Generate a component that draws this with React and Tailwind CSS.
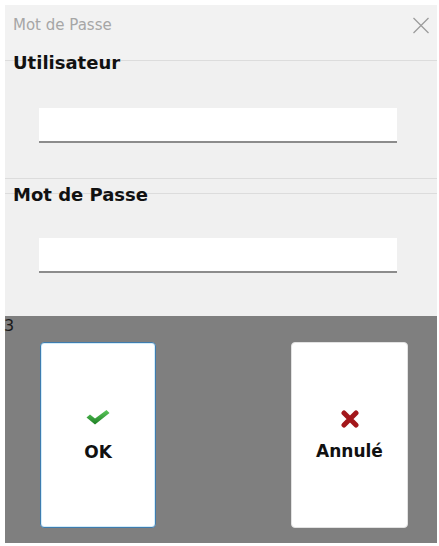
const labelFont = { fontFamily: '"DejaVu Sans", sans-serif' };

function GroupBox({ label, labelTop, children, className }) {
  return (
    <div className={`relative border-t border-[#dcdcdc] ${className || ""}`}>
      <span
        className={`absolute left-[8px] ${labelTop} text-[18px] leading-[21px] font-bold text-[#111]`}
        style={labelFont}
      >
        {label}
      </span>
      {children}
    </div>
  );
}

function Field() {
  return <div className="ml-[34px] w-[358px] h-[35px] bg-white border-b-2 border-[#8c8c8c]" />;
}

function CloseIcon() {
  return (
    <svg width="18" height="17" viewBox="0 0 18 17" className="mt-[1px]">
      <path d="M1.5 1 L16.5 16 M16.5 1 L1.5 16" stroke="#9c9c9c" strokeWidth="1.3" />
    </svg>
  );
}

function CheckIcon() {
  return (
    <svg width="26" height="16" viewBox="0 0 25 16">
      <defs>
        <linearGradient id="ck" x1="0" y1="0" x2="0" y2="1">
          <stop offset="0" stopColor="#5cc85c" />
          <stop offset="1" stopColor="#1d7f24" />
        </linearGradient>
      </defs>
      <polygon points="1,8.5 4.5,5.5 9.5,9.5 21,1 24,4 9.5,15.5" fill="url(#ck)" />
    </svg>
  );
}

function CrossIcon() {
  return (
    <svg width="18" height="18" viewBox="0 0 18 18">
      <path d="M3 3 L15 15 M15 3 L3 15" stroke="#a3171b" strokeWidth="5" strokeLinecap="round" />
    </svg>
  );
}

export default function App() {
  return (
    <div className="w-[439px] h-[546px] bg-white pt-[5px] pl-[5px]">
      <div className="w-[432px] h-[538px] bg-[#f0f0f0] flex flex-col">
        {/* title bar */}
        <div className="h-[55px] flex items-start justify-between pt-[11px] pl-[8px] pr-[7px] bg-[#f2f2f2]">
          <span className="text-[15px] leading-[18px] text-[#a6a6a6]" style={labelFont}>
            Mot de Passe
          </span>
          <CloseIcon />
        </div>

        <GroupBox label="Utilisateur" labelTop="-top-[9px]" className="pt-[47px] pb-[35px] border-b">
          <Field />
        </GroupBox>

        <GroupBox label="Mot de Passe" labelTop="-top-[10px]" className="mt-[14px] pt-[44px]">
          <Field />
        </GroupBox>

        {/* button panel */}
        <div className="mt-[43px] flex-1 bg-[#7f7f7f] flex flex-col">
          <span className="text-[16px] leading-[17px] h-[17px] text-[#1a1a1a] mt-[1px] ml-[-1px]" style={labelFont}>
            3
          </span>
          <div className="flex mt-[8px] pl-[35px]">
            <button className="w-[116px] h-[186px] bg-white rounded-[4px] border border-[#3f7cae] shadow-[inset_0_0_0_1px_#d2ecfa] flex flex-col items-center justify-center gap-[17px]">
              <CheckIcon />
              <span className="text-[17px] leading-[20px] font-bold text-[#111]" style={labelFont}>
                OK
              </span>
            </button>
            <button className="ml-[135px] w-[117px] h-[186px] bg-white rounded-[4px] border border-[#e2e2e2] flex flex-col items-center justify-center gap-[13px]">
              <CrossIcon />
              <span className="text-[17px] leading-[20px] font-bold text-[#111]" style={labelFont}>
                Annulé
              </span>
            </button>
          </div>
        </div>
      </div>
    </div>
  );
}
